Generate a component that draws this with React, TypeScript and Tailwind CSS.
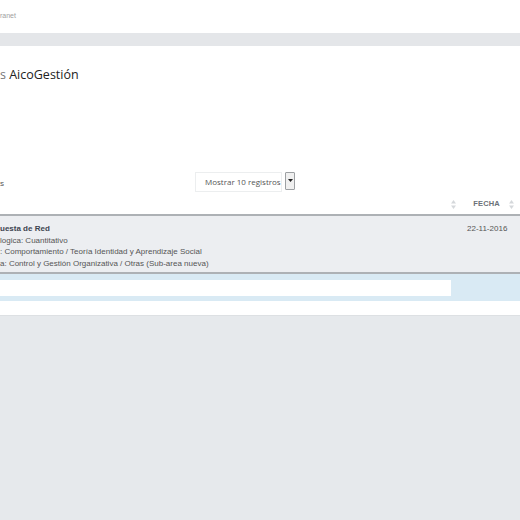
import React from "react";

function SortIcon() {
  return (
    <svg width="5" height="9" viewBox="0 0 5 9" className="shrink-0">
      <path d="M2.5 0 L5 3.5 L0 3.5 Z" fill="#d5d8db" />
      <path d="M2.5 9 L5 5.5 L0 5.5 Z" fill="#d5d8db" />
    </svg>
  );
}

export default function App() {
  return (
    <div
      className="w-[520px] h-[520px] overflow-hidden bg-[#e6e9ec] flex flex-col"
      style={{ fontFamily: '"Liberation Sans", Arial, sans-serif' }}
    >
      {/* top header */}
      <div className="h-[33px] bg-white flex items-center shrink-0">
        <span className="text-[7px] text-[#a0a0a0] leading-none -mt-[3px]">ranet</span>
      </div>
      {/* gray bar */}
      <div className="h-[13px] bg-[#e4e6e9] shrink-0" />
      {/* content */}
      <div className="bg-white flex flex-col shrink-0">
        <div className="h-[35px] flex items-end">
          <h1
            className="text-[12.5px] leading-none text-[#222]"
            style={{ fontFamily: '"Open Sans", sans-serif' }}
          >
            <span className="text-[#777]">s </span>AicoGestión
          </h1>
        </div>
        <div className="h-[91px]" />
        {/* controls */}
        <div className="h-[22px] flex items-center relative">
          <span className="text-[8px] text-[#555] leading-none mt-[2px]">s</span>
          <div className="absolute left-[195px] top-0 flex items-start gap-[3px]">
            <div className="w-[87px] h-[20px] border border-[#eceeef] bg-white flex items-center pl-[9px]">
              <span
                className="text-[8px] text-[#555] leading-none"
                style={{ fontFamily: '"Open Sans", sans-serif' }}
              >
                Mostrar 10 registros
              </span>
            </div>
            <div className="w-[10px] h-[18px] border border-[#9da0a3] bg-[#f0f0f0] flex items-center justify-center rounded-[1px]">
              <svg width="5" height="4" viewBox="0 0 5 4">
                <path d="M0 0 H5 L2.5 3 Z" fill="#222" />
              </svg>
            </div>
          </div>
        </div>
        {/* table header */}
        <div className="h-[22px] flex items-center justify-end border-b-2 border-[#adb1b5] relative">
          <div className="flex items-center pr-[6px]">
            <SortIcon />
            <span className="text-[7.5px] font-bold text-[#6b7178] ml-[17px] mr-[9px] tracking-[0.2px]">
              FECHA
            </span>
            <SortIcon />
          </div>
        </div>
        {/* row */}
        <div className="h-[58px] bg-[#eceef1] border-b-2 border-[#adb1b5] flex pt-[7px]">
          <div className="flex-1 flex flex-col text-[8px] leading-[11.5px] text-[#555]">
            <span className="font-bold text-[#3c4450]">uesta de Red</span>
            <span>logica: Cuantitativo</span>
            <span>: Comportamiento / Teoría Identidad y Aprendizaje Social</span>
            <span>a: Control y Gestión Organizativa / Otras (Sub-area nueva)</span>
          </div>
          <div className="w-[53px] text-[8px] leading-[11.5px] text-[#555]">22-11-2016</div>
        </div>
        {/* filter row */}
        <div className="h-[27px] bg-[#d9eaf4] flex items-start pt-[6px]">
          <div className="w-[451px] h-[16px] bg-white" />
        </div>
        {/* blank row */}
        <div className="h-[15px] bg-white border-b border-[#dde0e3]" />
      </div>
    </div>
  );
}
